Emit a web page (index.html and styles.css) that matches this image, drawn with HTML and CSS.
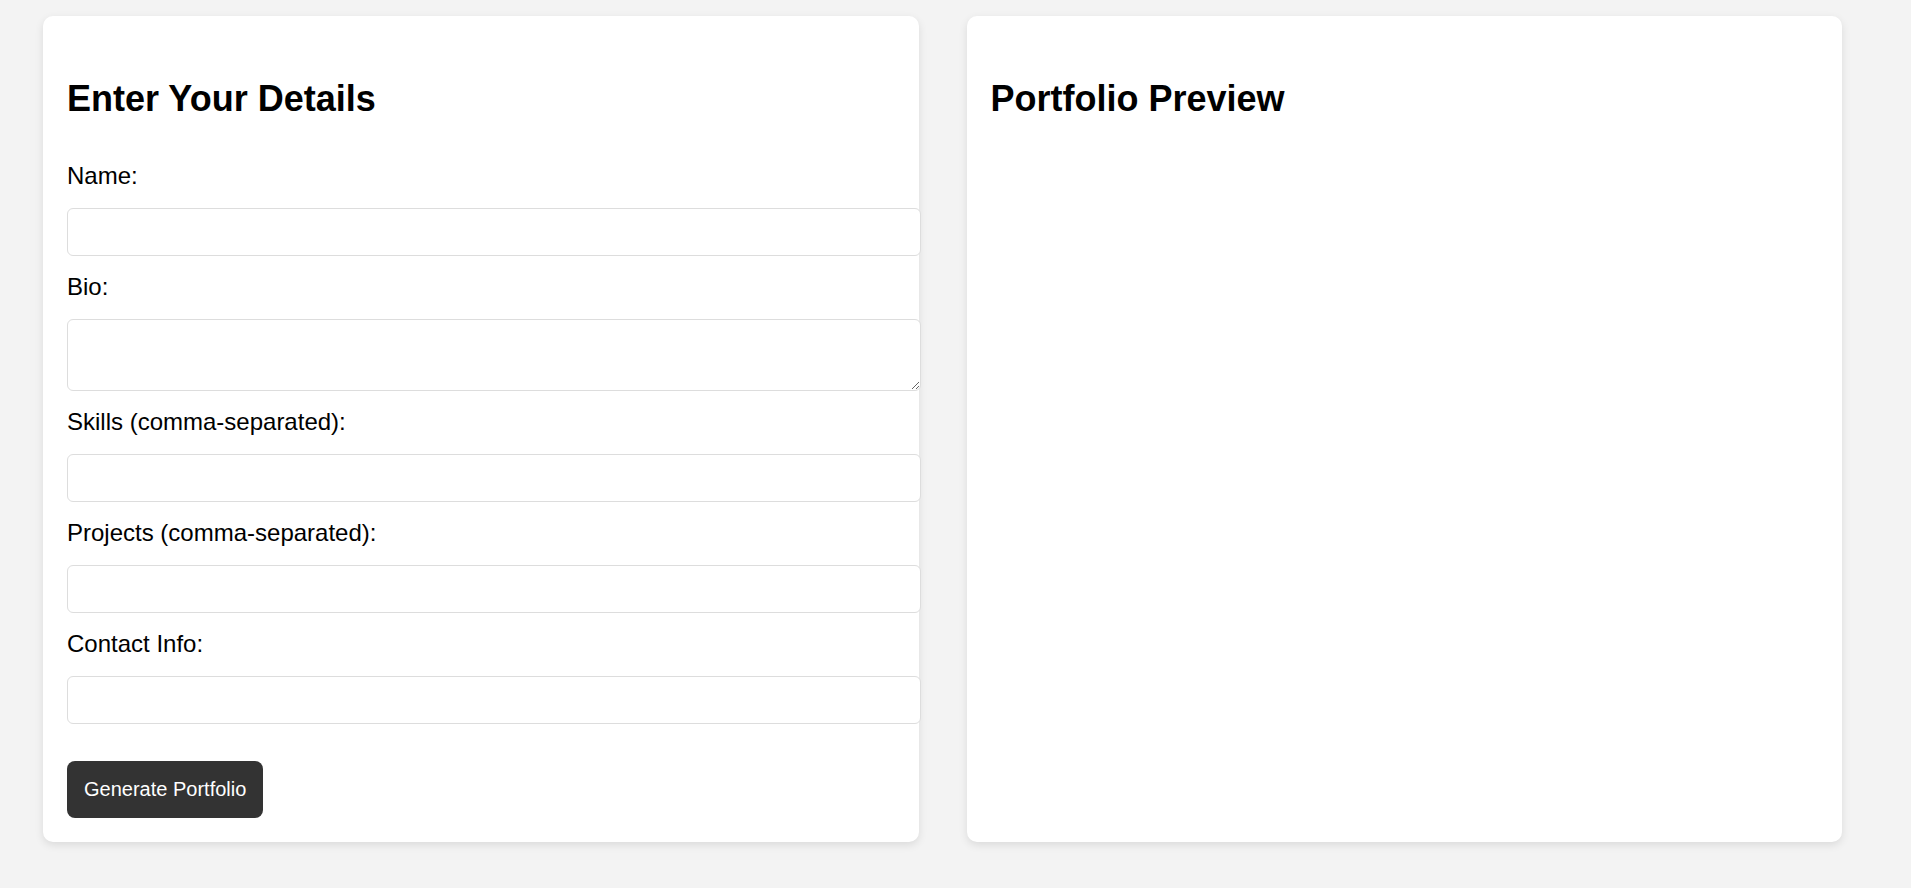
FILE: index.html
```html
<!DOCTYPE html>
<html lang="en">
<head>
<meta charset="utf-8">
<title>Portfolio Generator</title>
<link rel="stylesheet" href="styles.css">
</head>
<body>
<div class="container">
  <section class="card">
    <h2 class="card-title">Enter Your Details</h2>
    <form class="form">
      <label class="field-label" for="name">Name:</label>
      <input class="field" type="text" id="name">
      <label class="field-label" for="bio">Bio:</label>
      <textarea class="field field-area" id="bio"></textarea>
      <label class="field-label" for="skills">Skills (comma-separated):</label>
      <input class="field" type="text" id="skills">
      <label class="field-label" for="projects">Projects (comma-separated):</label>
      <input class="field" type="text" id="projects">
      <label class="field-label" for="contact">Contact Info:</label>
      <input class="field" type="text" id="contact">
      <button class="btn" type="button">Generate Portfolio</button>
    </form>
  </section>
  <section class="card">
    <h2 class="card-title">Portfolio Preview</h2>
    <div class="preview"></div>
  </section>
</div>
</body>
</html>
```
FILE: styles.css
```css
body {
  margin: 0;
  background: #f3f3f3;
  font-family: "Liberation Sans", Arial, sans-serif;
  font-size: 24px;
  color: #000;
}
.container {
  display: flex;
  gap: 48px;
  padding: 16px 69px 40px 43px;
  align-items: stretch;
}
.card {
  flex: 1 1 0;
  min-width: 0;
  background: #fff;
  padding: 24px;
  border-radius: 10px;
  box-shadow: 0 3px 8px rgba(0, 0, 0, 0.1);
}
.card-title {
  font-size: 36px;
  line-height: 41px;
  font-weight: bold;
  margin: 38px 0 43px;
}
.form {
  display: flex;
  flex-direction: column;
  gap: 17px;
}
.field-label {
  display: block;
  line-height: 28px;
  margin-bottom: 1px;
}
.field {
  display: block;
  width: 100%;
  padding: 12px;
  border: 1px solid #ddd;
  border-radius: 6px;
  font-family: "Liberation Sans", Arial, sans-serif;
  font-size: 20px;
  line-height: 22px;
  height: 22px;
  margin: 0;
  background: #fff;
  outline: none;
}
.field-area {
  height: 46px;
}
.btn {
  align-self: flex-start;
  margin-top: 20px;
  background: #333;
  color: #fff;
  border: none;
  border-radius: 8px;
  font-family: "Liberation Sans", Arial, sans-serif;
  font-size: 20px;
  line-height: 23px;
  padding: 17px;
  cursor: pointer;
}
```
